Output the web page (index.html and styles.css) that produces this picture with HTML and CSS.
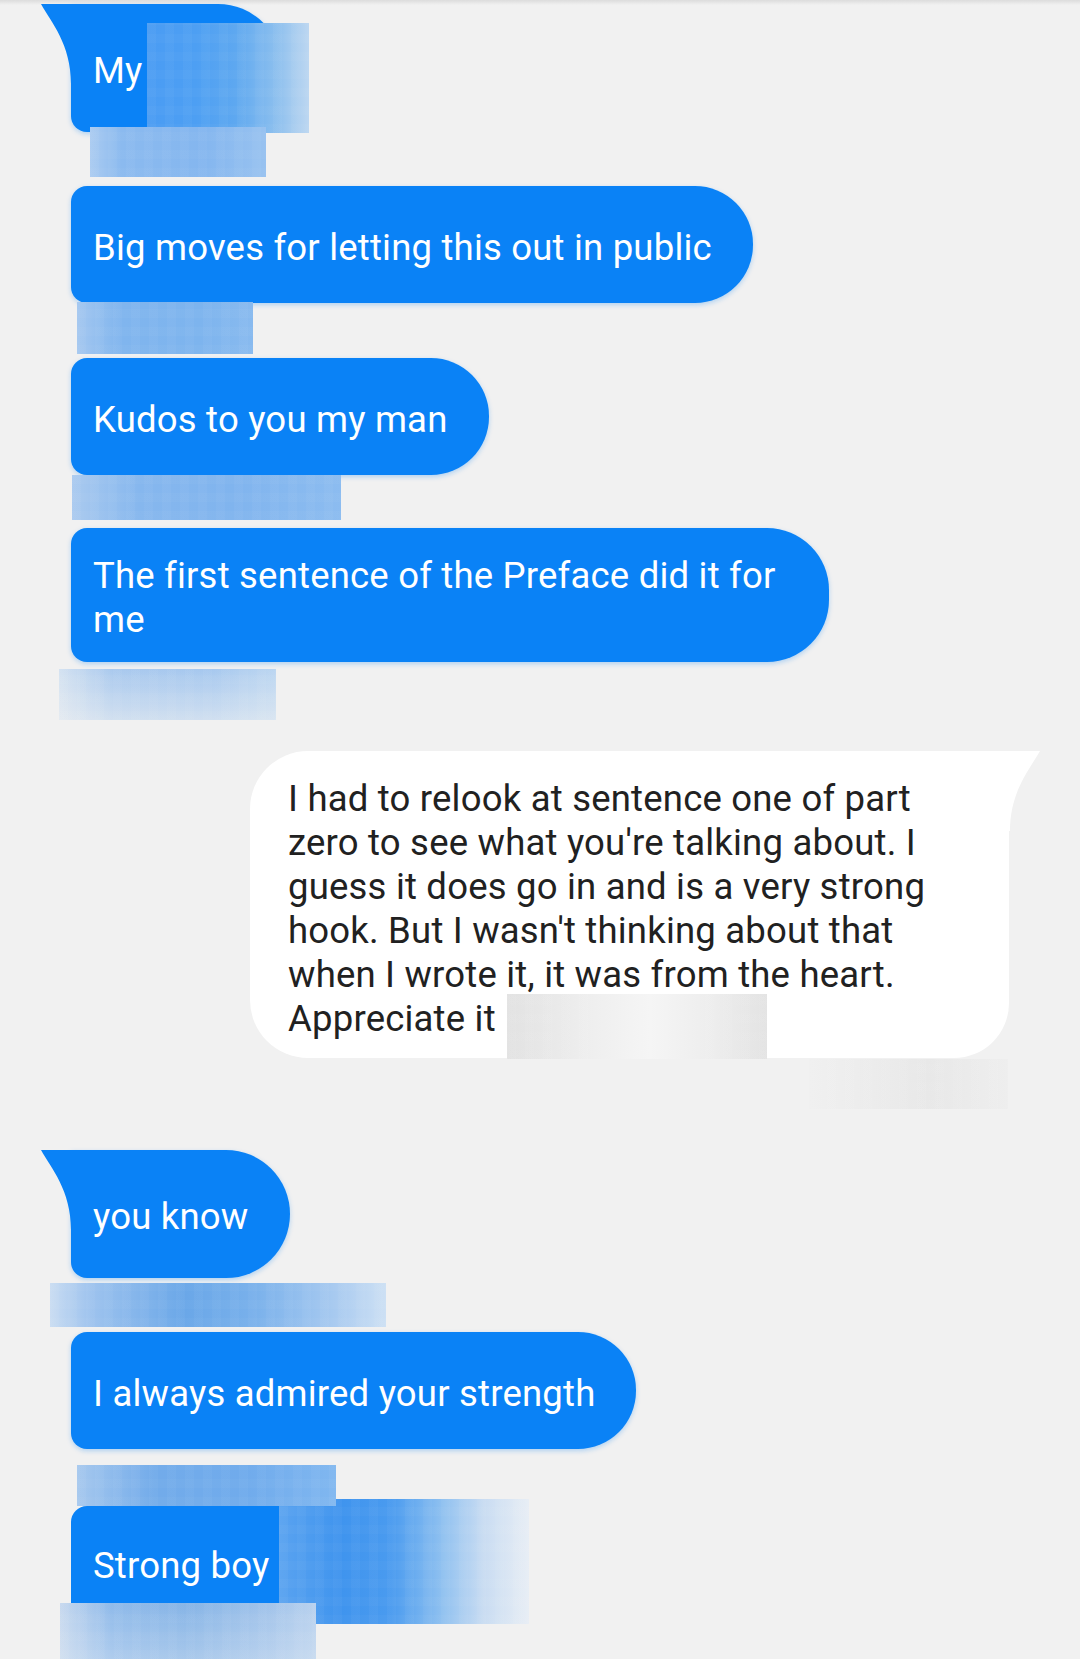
FILE: index.html
```html
<!DOCTYPE html>
<html lang="en">
<head>
<meta charset="utf-8">
<title>Messages</title>
<link rel="stylesheet" href="styles.css">
</head>
<body>
<main class="thread">
  <div class="row">
    <div class="bubble blue tailed tail-left w-my">My</div>
    <div class="redact over r-myname"></div>
  </div>
  <div class="redact r-a"></div>

  <div class="bubble blue m-b">Big moves for letting this out in public</div>
  <div class="redact r-b"></div>

  <div class="bubble blue m-c">Kudos to you my man</div>
  <div class="redact r-c"></div>

  <div class="bubble blue multi m-d">The first sentence of the Preface did it for me</div>
  <div class="redact r-d"></div>

  <div class="bubble white tail-right m-e">I had to relook at sentence one of part<br>zero to see what you're talking about. I<br>guess it does go in and is a very strong<br>hook. But I wasn't thinking about that<br>when I wrote it, it was from the heart.<br>Appreciate it<div class="redact over r-e"></div></div>
  <div class="redact r-f"></div>

  <div class="bubble blue tailed tail-left m-g">you know</div>
  <div class="redact r-g"></div>

  <div class="bubble blue m-h">I always admired your strength</div>
  <div class="redact r-h"></div>

  <div class="row">
    <div class="bubble blue m-i">Strong boy</div>
    <div class="redact over r-big"></div>
  </div>
  <div class="redact r-i"></div>
</main>
</body>
</html>
```

FILE: styles.css
```css
* { box-sizing: border-box; }

html, body {
  margin: 0;
  padding: 0;
}

body {
  width: 1080px;
  height: 1659px;
  overflow: hidden;
  background: linear-gradient(#dcdcdc 0, #f1f1f1 5px) top / 100% 5px no-repeat, #f1f1f1;
  font-family: Roboto, "Noto Sans", sans-serif;
}

.thread {
  display: flex;
  flex-direction: column;
  align-items: flex-start;
  padding-top: 4px;
}

.row {
  position: relative;
  display: flex;
}

/* ---------- bubbles ---------- */
.bubble {
  position: relative;
  flex: none;
  display: flex;
  align-items: center;
  min-height: 117px;
  padding: 26px 41px 20px 22px;
  font-size: 36.5px;
  letter-spacing: 0.2px;
  line-height: 44px;
}

.blue {
  margin-left: 71px;
  max-width: 758px;
  background: #0a82f6;
  color: #ffffff;
  border-radius: 16px 58px 58px 16px;
  box-shadow: 0 2px 5px rgba(10, 130, 246, 0.28);
}

.multi {
  border-radius: 16px 62px 62px 16px;
}

.tailed {
  min-height: 128px;
  border-radius: 0 64px 64px 16px;
}

.tail-left::before {
  content: "";
  position: absolute;
  left: -30px;
  top: 0;
  width: 31px;
  height: 80px;
  background: #0a82f6;
  clip-path: path("M0 0 C10 18 30 40 30 80 L31 80 L31 0 Z");
}

.white {
  display: block;
  width: 759px;
  margin-left: 250px;
  padding: 26px 30px 17px 38px;
  background: #ffffff;
  color: #212121;
  border-radius: 58px 0 55px 58px;
}

.tail-right::after {
  content: "";
  position: absolute;
  right: -31px;
  top: 0;
  width: 31px;
  height: 80px;
  background: #ffffff;
  clip-path: path("M31 0 C21 18 1 40 1 80 L0 80 L0 0 Z");
}

.w-my { width: 211px; }

.m-b { margin-top: 9px; }
.m-c { margin-top: 4px; }
.m-d { margin-top: 8px; }
.m-e { margin-top: 31px; }
.m-g { margin-top: 41px; }
.m-h { margin-top: 5px; }
.m-i {
  margin-top: 0;
  padding-top: 22px;
  border-radius: 16px 0 0 0;
  box-shadow: none;
}

/* ---------- redacted (pixelated) blocks ---------- */
.redact {
  flex: none;
  position: relative;
  z-index: 1;
  background-image:
    repeating-linear-gradient(90deg, rgba(255,255,255,0.03) 0 9px, rgba(255,255,255,0) 9px 18px),
    repeating-linear-gradient(0deg, rgba(255,255,255,0.025) 0 9px, rgba(255,255,255,0) 9px 18px),
    var(--fill);
}

.over {
  position: absolute;
}

.r-myname {
  left: 147px;
  top: 19px;
  width: 162px;
  height: 110px;
  --fill: linear-gradient(90deg, #4a9cf3 0%, #4d9ff3 30%, #5ea8f0 55%, #8cbfee 80%, #bdd7f1 100%);
}

.r-a {
  margin: -5px 0 0 90px;
  width: 176px;
  height: 50px;
  --fill: linear-gradient(90deg, #aacbf1 0%, #8bbaef 18%, #84b6ef 65%, #98c2f0 100%);
}

.r-b {
  margin: -1px 0 0 77px;
  width: 176px;
  height: 52px;
  --fill: linear-gradient(90deg, #a4c7f0 0%, #80b5ee 25%, #7db4ee 70%, #88baef 100%);
}

.r-c {
  margin: 0 0 0 72px;
  width: 269px;
  height: 45px;
  --fill: linear-gradient(90deg, #aacaef 0%, #86b7ee 25%, #80b4ee 60%, #8cbcf0 100%);
}

.r-d {
  margin: 7px 0 0 59px;
  width: 217px;
  height: 51px;
  --fill: linear-gradient(180deg, rgba(241,241,241,0) 0%, rgba(241,241,241,0.55) 100%),
          linear-gradient(90deg, #d3e1f1 0%, #a9c9ee 25%, #a6c8ef 70%, #bcd6f1 100%);
}

.r-e {
  left: 257px;
  top: 243px;
  width: 260px;
  height: 65px;
  --fill: linear-gradient(90deg, #e2e2e2 0%, #eeeeee 30%, #f5f5f5 55%, #ededed 80%, #e3e3e3 100%);
}

.r-f {
  margin: 1px 0 0 809px;
  width: 199px;
  height: 50px;
  --fill: linear-gradient(90deg, #f0f0f0 0%, #ebebeb 40%, #e8e8e8 60%, #eeeeee 100%);
}

.r-g {
  margin: 5px 0 0 50px;
  width: 336px;
  height: 44px;
  --fill: linear-gradient(90deg, #c9dcf2 0%, #9ec3ee 12%, #6aa7e8 40%, #78b0eb 60%, #a8caf0 85%, #cde0f4 100%);
}

.r-h {
  margin: 16px 0 0 77px;
  width: 259px;
  height: 41px;
  --fill: linear-gradient(90deg, #a6c8ee 0%, #72abea 30%, #70abec 65%, #80b7f0 100%);
}

.r-big {
  left: 279px;
  top: -7px;
  width: 250px;
  height: 125px;
  z-index: 0;
  --fill: linear-gradient(90deg, #5aa3f0 0%, #3f94ee 25%, #4a9bef 45%, #8ec0f0 65%, #c9dcf2 82%, #e8eef5 100%);
}

.r-i {
  margin: -20px 0 0 60px;
  width: 256px;
  height: 56px;
  z-index: 2;
  --fill: linear-gradient(180deg, rgba(255,255,255,0) 0%, rgba(230,236,244,0.35) 100%),
          linear-gradient(90deg, #c6d8ee 0%, #8fbaea 20%, #86b4e6 50%, #9fc2ea 80%, #b8d1ee 100%);
}
```
